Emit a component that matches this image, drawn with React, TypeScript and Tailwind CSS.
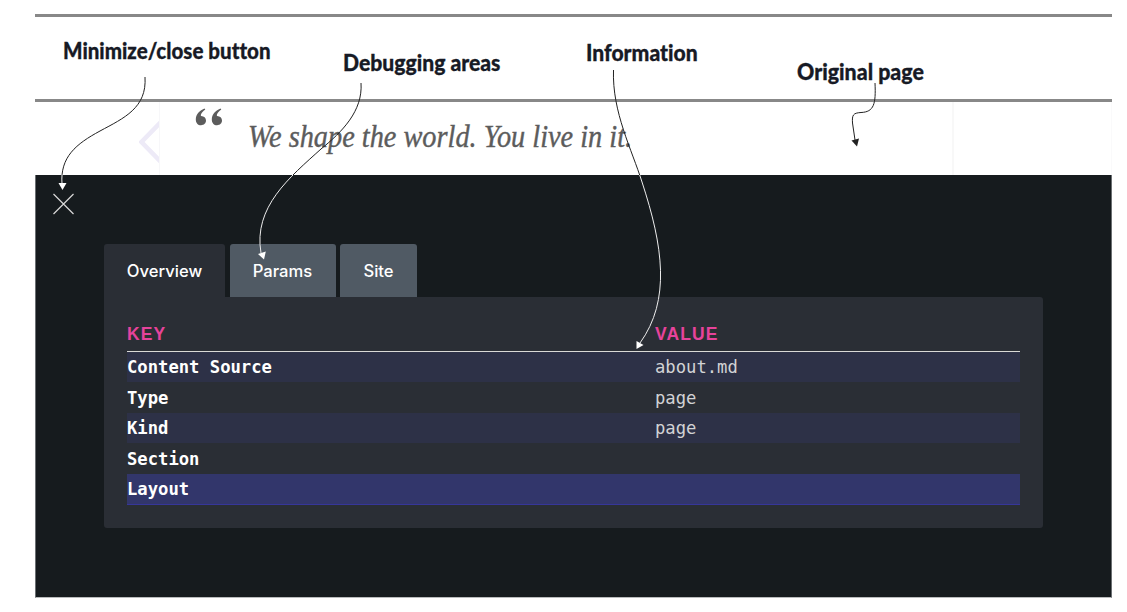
import React from "react";

const tabs = [
  { label: "Overview", cls: "w-[121px] bg-[#2a2e35]" },
  { label: "Params", cls: "w-[106px] bg-[#505a64]" },
  { label: "Site", cls: "w-[77px] bg-[#505a64]" },
];

const rows = [
  { key: "Content Source", value: "about.md", cls: "h-[30px] bg-[#2d3147]" },
  { key: "Type", value: "page", cls: "h-[31px]" },
  { key: "Kind", value: "page", cls: "h-[30px] bg-[#2d3147]" },
  { key: "Section", value: "", cls: "h-[31px]" },
  { key: "Layout", value: "", cls: "h-[31px] bg-[#32366b] border-b border-[#36369a]" },
];

const labels = [
  { text: "Minimize/close button", cls: "left-[63px] top-[36px] scale-x-[0.933]" },
  { text: "Debugging areas", cls: "left-[343px] top-[48px] scale-x-[0.96]" },
  { text: "Information", cls: "left-[586px] top-[38px] scale-x-[0.96]" },
  { text: "Original page", cls: "left-[797px] top-[57px] scale-x-[0.97]" },
];

function QuoteStrip() {
  return (
    <div className="flex h-[73px] border-r border-[#fafafb]">
      <div className="flex w-[125px] justify-end border-r border-[#f7f7f9]">
        <svg className="h-[73px] w-[20px]" viewBox="0 0 20 73" fill="none">
          <path d="M24 18L2.500 40L24 62" stroke="#edeaf7" strokeWidth="4.500" />
        </svg>
      </div>
      <div className="flex w-[794px] border-r-2 border-[#f8f8f8] pl-[35px]">
        <svg className="mt-[5px] h-[20px] w-[28px] shrink-0" viewBox="0 0 28 20" fill="#5c5c5c">
          <path d="M9.500 1.500C4 4 .8 7.500 .8 12.500C.8 16 3 18.300 6 18.300C9 18.300 11 16.300 11 13.600C11 10.800 9 9.200 6.200 9C5.500 9 5.500 6 10.300 2.600Z" />
          <path d="M25.500 1.500C20 4 16.800 7.500 16.800 12.500C16.800 16 19 18.300 22 18.300C25 18.300 27 16.300 27 13.600C27 10.800 25 9.200 22.200 9C21.500 9 21.500 6 26.300 2.600Z" />
        </svg>
        <div className="ml-[25px] mt-[14px] origin-left scale-x-[0.885] whitespace-nowrap font-['Liberation_Serif',serif] text-[32px] leading-[40px] italic text-[#5c5c5c] [-webkit-text-stroke:0.4px_#5c5c5c]">
          We shape the world. You live in it.
        </div>
      </div>
    </div>
  );
}

function DebugPanel() {
  return (
    <div className="h-[423px] border-x border-b border-x-[#6b6f72] border-b-[#b9bbbc] bg-[#161b1e] pl-[17px] pt-[18px]">
      <svg className="h-[22px] w-[22px]" viewBox="0 0 22 22" fill="none" aria-label="Close">
        <path d="M.5 1L20.500 21M20.500 1L.5 21" stroke="#d8d8d8" strokeWidth="1.200" />
      </svg>
      <div className="ml-[51px] mt-[29px] w-[939px]">
        <div className="flex gap-[4.500px]">
          {tabs.map((t) => (
            <button
              key={t.label}
              className={`h-[53px] rounded-t-[3px] pt-[1px] text-center font-[Inter,sans-serif] text-[16.600px] font-medium text-white ${t.cls}`}
            >
              {t.label}
            </button>
          ))}
        </div>
        <div className="h-[231px] rounded-b-[3px] rounded-tr-[3px] bg-[#2a2e35] pl-[23px] pr-[23px] pt-[21px]">
          <div className="flex h-[34px] items-center border-b border-[#d9d9d6] font-['Liberation_Sans',sans-serif] text-[17.500px] font-bold tracking-[1.100px] text-[#e6439b]">
            <div className="w-[528px]">KEY</div>
            <div>VALUE</div>
          </div>
          {rows.map((r) => (
            <div
              key={r.key}
              className={`flex items-center pt-[2px] font-['DejaVu_Sans_Mono',monospace] text-[17.200px] ${r.cls}`}
            >
              <div className="w-[528px] font-bold text-white">{r.key}</div>
              <div className="text-[#d2d3d5]">{r.value}</div>
            </div>
          ))}
        </div>
      </div>
    </div>
  );
}

function Callouts() {
  return (
    <>
      {labels.map((l) => (
        <div
          key={l.text}
          className={`absolute origin-left whitespace-nowrap font-[Lato,sans-serif] text-[22px] font-black leading-[30px] text-[#171a25] [font-variant-ligatures:none] [-webkit-text-stroke:0.3px_#171a25] ${l.cls}`}
        >
          {l.text}
        </div>
      ))}
      <svg className="pointer-events-none absolute inset-0 h-[612px] w-[1127px]" viewBox="0 0 1127 612" fill="none">
        <defs>
          <clipPath id="light">
            <rect width="1127" height="175" />
          </clipPath>
          <clipPath id="dark">
            <rect y="175" width="1127" height="437" />
          </clipPath>
          <g id="curves" strokeWidth="1">
            <path d="M145 77C147 108 124 118 100 131C76 144 60 157 62 184" />
            <path d="M361 83C363 111 342 132 321 149C290 177 253 207 261 253" />
            <path d="M613.500 70C612 112 632 150 642 182C663 246 671 300 640 343" />
          </g>
        </defs>
        <use href="#curves" stroke="#222" clipPath="url(#light)" />
        <use href="#curves" stroke="#eee" clipPath="url(#dark)" />
        <path d="M875 83C876 104 874 112 861 112.500C853 113 852 115 852.500 123L855 140" stroke="#222" strokeWidth="1" />
        <path d="M851.500 140.500L859 138.500L857 146.500Z" fill="#222" />
        <path d="M58.500 183L66.500 183L62.500 190Z" fill="#fff" />
        <path d="M258 254L265.800 251.500L264 259.500Z" fill="#fff" />
        <path d="M636.500 341L643.500 345L636.500 349Z" fill="#fff" />
      </svg>
    </>
  );
}

export default function App() {
  return (
    <main className="relative h-[612px] w-[1127px] overflow-hidden bg-white pl-[35px] pt-[14px]">
      <div className="w-[1077px]">
        <div className="h-[88px] border-y-[3px] border-[#888888]" />
        <QuoteStrip />
        <DebugPanel />
      </div>
      <Callouts />
    </main>
  );
}
